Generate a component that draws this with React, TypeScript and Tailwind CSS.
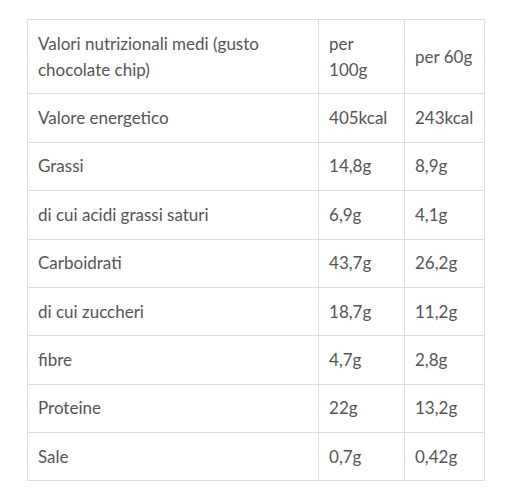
const ROWS: [string, string, string][] = [
  ['Valore energetico', '405kcal', '243kcal'],
  ['Grassi', '14,8g', '8,9g'],
  ['di cui acidi grassi saturi', '6,9g', '4,1g'],
  ['Carboidrati', '43,7g', '26,2g'],
  ['di cui zuccheri', '18,7g', '11,2g'],
  ['fibre', '4,7g', '2,8g'],
  ['Proteine', '22g', '13,2g'],
  ['Sale', '0,7g', '0,42g'],
]

const cell = 'border border-[#dddddd] px-[10px] py-[10.7px] align-middle text-left font-normal'

export default function App() {
  return (
    <div className="min-h-[500px] bg-white pl-[27px] pt-[19px] font-['Lato',sans-serif] text-[17px] leading-[26px] text-[#555555]">
      <table className="w-[458px] border-collapse">
        <colgroup>
          <col className="w-[292px]" />
          <col className="w-[86px]" />
          <col className="w-[80px]" />
        </colgroup>
        <thead>
          <tr>
            <th className={cell}>Valori nutrizionali medi (gusto chocolate chip)</th>
            <th className={cell}>per 100g</th>
            <th className={cell}>per 60g</th>
          </tr>
        </thead>
        <tbody>
          {ROWS.map(([label, a, b]) => (
            <tr key={label}>
              <td className={cell}>{label}</td>
              <td className={cell}>{a}</td>
              <td className={cell}>{b}</td>
            </tr>
          ))}
        </tbody>
      </table>
    </div>
  )
}
